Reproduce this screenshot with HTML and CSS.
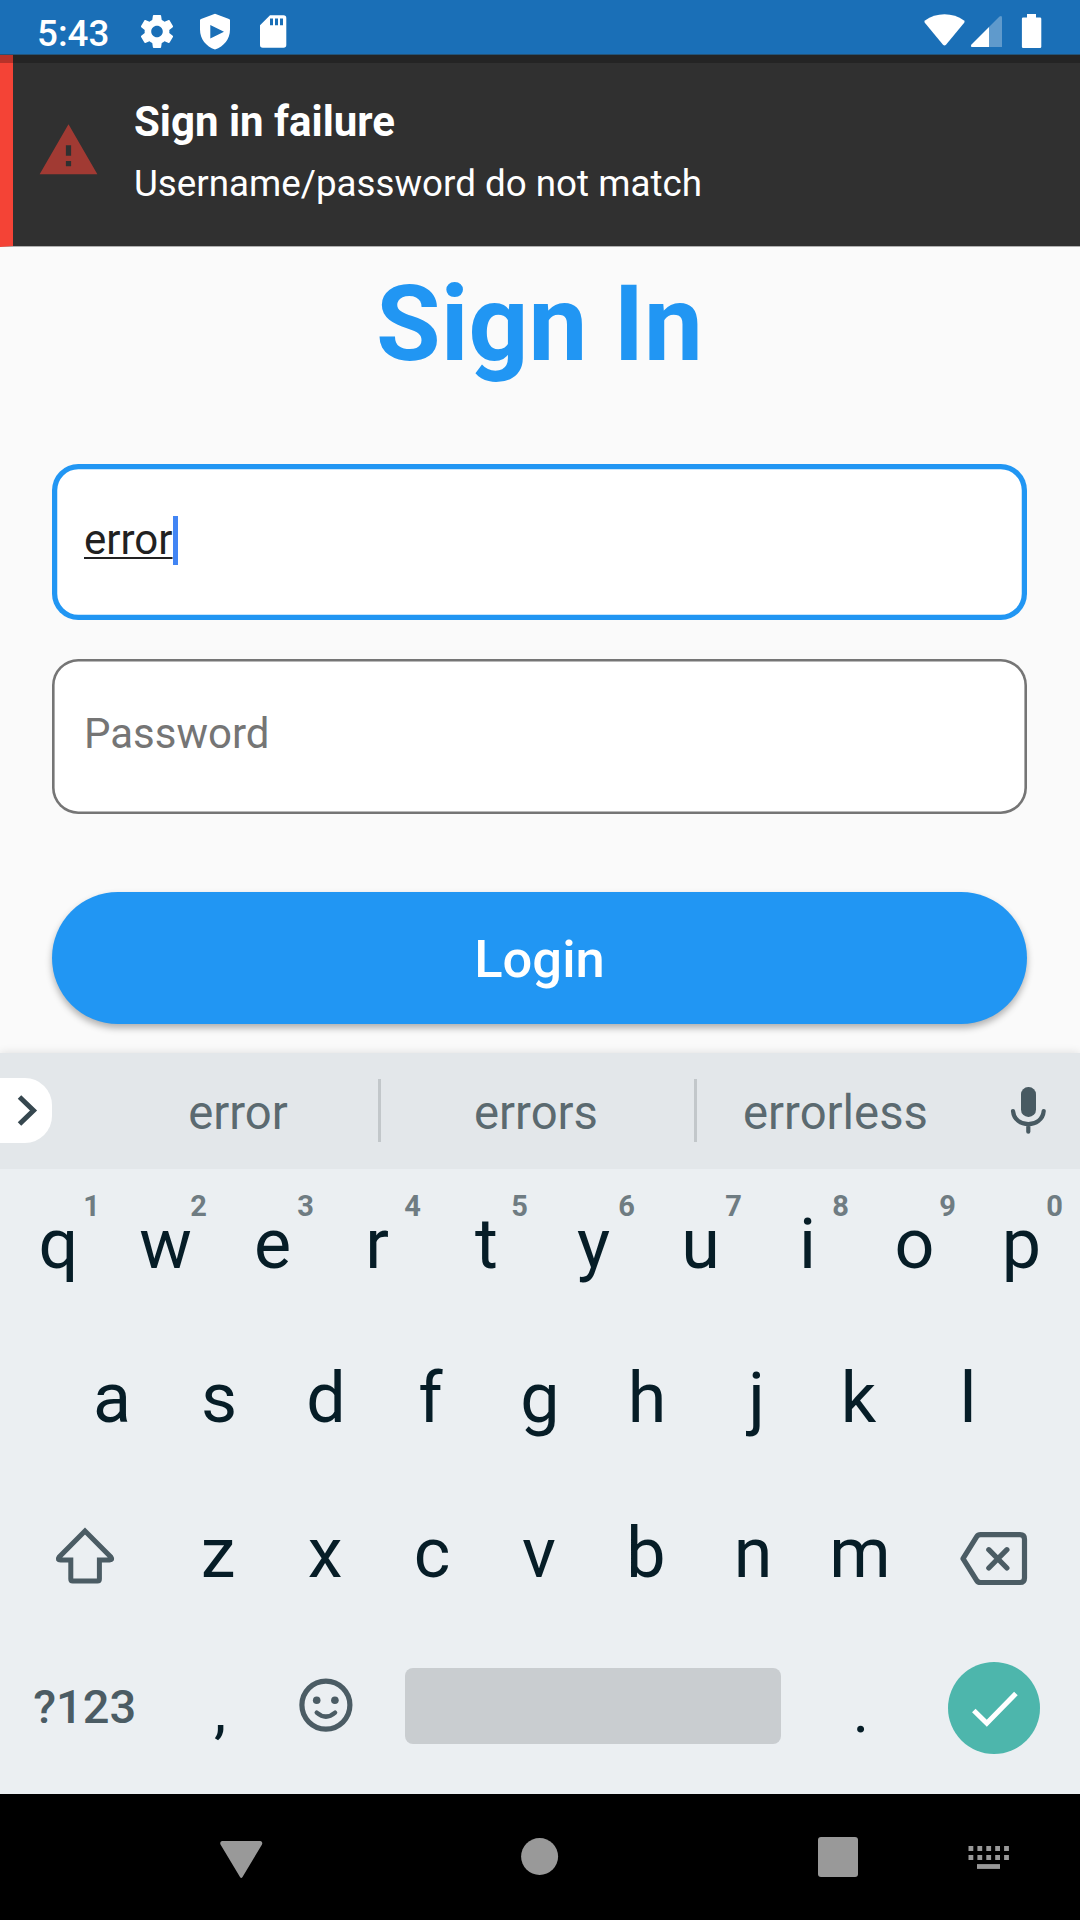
FILE: index.html
```html
<!DOCTYPE html>
<html lang="en">
<head>
<meta charset="utf-8">
<title>Sign In</title>
<link rel="stylesheet" href="styles.css">
</head>
<body>
<div class="screen">
  <header class="status">
    <span class="clock">5:43</span>
    <svg class="status-icon" width="40" height="54" viewBox="137 0 40 54"><path transform="translate(137.2 11.7) scale(1.65)" fill="#fff" d="M19.43 12.98c.04-.32.07-.64.07-.98s-.03-.66-.07-.98l2.11-1.65c.19-.15.24-.42.12-.64l-2-3.46c-.12-.22-.39-.3-.61-.22l-2.49 1c-.52-.4-1.08-.73-1.69-.98l-.38-2.65C14.46 2.18 14.25 2 14 2h-4c-.25 0-.46.18-.49.42l-.38 2.65c-.61.25-1.17.59-1.69.98l-2.49-1c-.23-.09-.49 0-.61.22l-2 3.46c-.13.22-.07.49.12.64l2.11 1.65c-.04.32-.07.65-.07.98s.03.66.07.98l-2.11 1.65c-.19.15-.24.42-.12.64l2 3.46c.12.22.39.3.61.22l2.49-1c.52.4 1.08.73 1.69.98l.38 2.65c.03.24.24.42.49.42h4c.25 0 .46-.18.49-.42l.38-2.65c.61-.25 1.17-.59 1.69-.98l2.49 1c.23.09.49 0 .61-.22l2-3.46c.12-.22.07-.49-.12-.64l-2.11-1.65zM12 15.5c-1.93 0-3.5-1.57-3.5-3.5s1.57-3.5 3.5-3.5 3.5 1.57 3.5 3.5-1.57 3.5-3.5 3.5z"/></svg>
    <svg class="status-icon" width="40" height="54" viewBox="195 0 40 54"><path fill="#fff" fill-rule="evenodd" d="M215 13.7 229 19q1 .4 1 1.500V29.500C230 39 224 46.500 215 49.500C206 46.500 200 39 200 29.500V20.500q0-1.100 1-1.500ZM210.300 25V38.500L224 31.700Z"/></svg>
    <svg class="status-icon" width="40" height="54" viewBox="253 0 40 54"><path fill="#fff" fill-rule="evenodd" d="M270 15.300H283.500q2.800 0 2.800 2.800V45q0 2.700-2.800 2.700H262.800q-2.800 0-2.800-2.700V25.300ZM270 18.500V25.300H273V18.500ZM275 18.500V25.300H278V18.500ZM280 18.500V25.300H283V18.500Z"/></svg>
    <svg class="status-right" width="130" height="54" viewBox="920 0 130 54">
      <path fill="#fff" d="M925 20.500C936 12 953 12 964 20.500q1.200 1 .2 2.300L946 44.700q-1.500 1.500-3 0L924.800 22.800q-1-1.300.2-2.300Z"/>
      <path fill="#fff" fill-opacity=".3" d="M989 27 999.500 16.500q2.500-1.500 2.500 1V47H989Z"/>
      <path fill="#fff" d="M989 27V47H972q-2-.5-.5-2.500Z"/>
      <path fill="#fff" d="M1027 14h9v3.500h4q1.300 0 1.300 1.300V46.700q0 1.300-1.300 1.300H1023.200q-1.300 0-1.300-1.300V18.800q0-1.300 1.300-1.300h3.800Z"/>
    </svg>
  </header>

  <section class="flushbar" role="alert">
    <svg class="warning" width="63" height="63" viewBox="0 0 24 24"><path fill="#a13a33" d="M1 21h22L12 2 1 21zm12-3h-2v-2h2v2zm0-4h-2v-4h2v4z"/></svg>
    <div class="flush-text">
      <div class="flush-title">Sign in failure</div>
      <div class="flush-message">Username/password do not match</div>
    </div>
  </section>

  <main class="content">
    <h1 class="heading">Sign In</h1>
    <div class="field focused"><span class="typed">error</span><span class="caret"></span></div>
    <div class="field"><span class="placeholder">Password</span></div>
    <div class="login" role="button">Login</div>
  </main>

  <section class="keyboard">
    <div class="suggestions">
      <div class="expand"><svg width="52" height="65" viewBox="0 1078.500 52 65"><path d="M19.500 1097.500 33.500 1111 19.500 1124.500" fill="none" stroke="#36474f" stroke-width="5"/></svg></div>
      <div class="word first">error</div>
      <div class="word middle">errors</div>
      <div class="word last">errorless</div>
      <svg class="mic" width="103" height="116" viewBox="977 1053 103 116"><rect x="1021" y="1087" width="15" height="30" rx="7.300" fill="#485a62"/><path d="M1013 1111C1014.500 1128.500 1042.200 1128.500 1043.700 1111M1028.300 1124V1131.700" fill="none" stroke="#485a62" stroke-width="4.200" stroke-linecap="round"/></svg>
    </div>
    <div class="keys">
      <div class="row">
        <div class="key">q<span class="hint">1</span></div><div class="key">w<span class="hint">2</span></div><div class="key">e<span class="hint">3</span></div><div class="key nudge-left">r<span class="hint">4</span></div><div class="key">t<span class="hint">5</span></div><div class="key">y<span class="hint">6</span></div><div class="key">u<span class="hint">7</span></div><div class="key">i<span class="hint">8</span></div><div class="key">o<span class="hint">9</span></div><div class="key">p<span class="hint">0</span></div>
      </div>
      <div class="row home">
        <div class="key">a</div><div class="key">s</div><div class="key">d</div><div class="key nudge-left">f</div><div class="key">g</div><div class="key">h</div><div class="key nudge-right">j</div><div class="key nudge-left">k</div><div class="key">l</div>
      </div>
      <div class="row">
        <div class="key wide"><svg width="80" height="80" viewBox="45 1513 80 80"><path d="M85 1531 59 1557.200Q57 1560 60.500 1560H70.800V1579q0 2 2 2H97.400q2 0 2-2V1560H109.700Q113 1560 111 1557.200Z" fill="none" stroke="#4b5c64" stroke-width="5"/></svg></div>
        <div class="key nudge-slight">z</div><div class="key nudge-slight">x</div><div class="key nudge-slight">c</div><div class="key nudge-slight">v</div><div class="key nudge-slight">b</div><div class="key nudge-slight">n</div><div class="key nudge-slight">m</div>
        <div class="key wide"><svg width="80" height="80" viewBox="954.500 1513 80 80"><path d="M962.500 1558.700 976.200 1536.700Q977.500 1534.700 980 1534.700H1019.500q4.500 0 4.500 4.500V1578q0 4.500-4.500 4.500H980Q977.500 1582.500 976.200 1580.500ZM988.300 1549.700 1006.400 1568M1006.400 1549.700 988.300 1568" fill="none" stroke="#4b5c64" stroke-width="5.200" stroke-linecap="round" stroke-linejoin="round"/></svg></div>
      </div>
      <div class="row">
        <div class="key wide symbols">?123</div>
        <div class="key punct comma">,</div>
        <div class="key"><svg width="80" height="80" viewBox="285.500 1667.400 80 80"><circle cx="325.400" cy="1705.500" r="24" fill="none" stroke="#4b5c64" stroke-width="5.200"/><circle cx="316.200" cy="1700.700" r="3.800" fill="#4b5c64"/><circle cx="334.400" cy="1700.700" r="3.800" fill="#4b5c64"/><path d="M316.200 1713Q325.400 1721 334.600 1713" fill="none" stroke="#4b5c64" stroke-width="4.400" stroke-linecap="round"/></svg></div>
        <div class="key space"><span class="space-bar"></span></div>
        <div class="key punct">.</div>
        <div class="key wide"><svg width="100" height="100" viewBox="945 1657 100 100"><circle cx="994" cy="1708" r="46" fill="#4db6ac"/><path d="M973.800 1710.500 986.800 1723.300 1015.900 1693.500" fill="none" stroke="#fff" stroke-width="5"/></svg></div>
      </div>
    </div>
  </section>

  <nav class="navbar">
    <svg width="44" height="126" viewBox="219 1794 44 126"><path fill="#999" d="M222 1841H260.500Q263 1841.500 262 1844.500L242.500 1877Q241.200 1879 240 1877L220.500 1844.500Q219.500 1841.500 222 1841Z"/></svg>
    <svg width="44" height="126" viewBox="518 1794 44 126"><circle cx="539.600" cy="1856.500" r="18.500" fill="#999"/></svg>
    <svg width="44" height="126" viewBox="816 1794 44 126"><rect x="818" y="1837" width="40" height="40" rx="3" fill="#999"/></svg>
    <svg class="ime" width="44" height="126" viewBox="967 1794 44 126"><path stroke="#999" stroke-width="5" stroke-dasharray="4.800 4.100" d="M968.500 1848.500H1009M968.500 1857.500H1009"/><path stroke="#999" stroke-width="4.800" d="M977 1866.500H1000"/></svg>
  </nav>
</div>
</body>
</html>
```
FILE: styles.css
```css
* { box-sizing: border-box; }
body { margin: 0; font-family: Roboto, sans-serif; background: #fafafa; }
svg { display: block; flex: none; }

.screen {
  width: 1080px;
  height: 1920px;
  display: flex;
  flex-direction: column;
  overflow: hidden;
}

/* Status bar */
.status {
  height: 55px;
  flex: none;
  display: flex;
  background: #1a6fb7;
  border-bottom: 1px solid #235378;
  color: #fff;
}
.clock {
  width: 100px;
  margin-left: 37px;
  font-size: 36.75px;
  font-weight: 500;
  line-height: 68px;
}
.status-icon { margin-right: 18px; }
.status-right { margin-left: auto; margin-right: 30px; }

/* Error notification */
.flushbar {
  height: 192px;
  flex: none;
  display: flex;
  border-left: 13px solid #f44336;
  border-bottom: 1px solid #b0b0b0;
  padding-left: 24px;
  background: #303030;
  box-shadow: inset 0 8px #242424;
  color: #fff;
  position: relative;
}
.flushbar::before {
  content: "";
  position: absolute;
  left: -13px;
  top: 0;
  width: 13px;
  height: 8px;
  background: #b73229;
}
.warning { margin-top: 64px; }
.flush-text { margin: 42px 0 0 34px; }
.flush-title { font-size: 42px; font-weight: 700; line-height: 50px; }
.flush-message { font-size: 36.75px; line-height: 44px; margin-top: 15px; }

/* Form */
.content {
  height: 806px;
  flex: none;
  display: flex;
  flex-direction: column;
  padding: 17px 53px 0 52px;
}
.heading {
  margin: 0 0 78.300px;
  font-size: 105px;
  font-weight: 700;
  line-height: 122px;
  text-align: center;
  color: #2196f3;
}
.field {
  height: 155.300px;
  flex: none;
  margin-bottom: 39px;
  display: flex;
  align-items: center;
  padding: 0 32px 5px;
  border-radius: 26.250px;
  background: #fff;
  box-shadow: inset 0 0 0 2.600px #757575;
  font-size: 42px;
}
.field.focused { box-shadow: inset 0 0 0 5.250px #2196f3; }
.typed {
  color: #212121;
  text-decoration: underline;
  text-decoration-thickness: 2px;
  text-underline-offset: 3px;
  text-decoration-skip-ink: none;
}
.caret { width: 5px; height: 49px; background: #4285f4; margin-top: 2px; }
.placeholder { color: #757575; }
.login {
  height: 131.700px;
  flex: none;
  margin-top: 39.200px;
  border-radius: 66px;
  background: #2196f3;
  box-shadow: 0 4px 7px rgba(0, 0, 0, .3);
  color: #fff;
  font-size: 52.500px;
  font-weight: 500;
  line-height: 135px;
  text-align: center;
}

/* Keyboard */
.keyboard {
  height: 741px;
  flex: none;
  background: #ebeff2;
  box-shadow: 0 0 9px rgba(0, 0, 0, .12);
}
.suggestions {
  height: 116px;
  display: flex;
  align-items: center;
  background: #e3e7ea;
}
.expand {
  width: 52px;
  height: 65px;
  margin-bottom: 1px;
  background: #fff;
  border-radius: 0 27px 27px 0;
}
.word {
  height: 63px;
  margin-bottom: 1px;
  font-size: 47.250px;
  line-height: 69px;
  text-align: center;
  color: #5b6a70;
}
.first { width: 283px; margin-left: 46px; }
.middle { width: 316px; padding-right: 3px; }
.last { width: 280px; padding-right: 3px; }
.first, .middle { border-right: 3px solid #c2c7ca; }

.keys {
  height: 625px;
  overflow: hidden;
}
.row {
  height: 154.400px;
  display: flex;
  justify-content: center;
}
.key {
  width: 107px;
  flex: none;
  padding-bottom: 4px;
  position: relative;
  display: flex;
  align-items: center;
  justify-content: center;
  font-size: 70px;
  color: #061d27;
}
.home .key { padding-bottom: 6px; }
.key.nudge-left { padding-right: 5px; }
.key.nudge-right { padding-left: 5px; }
.key.nudge-slight { padding-right: 2px; }
.hint {
  position: absolute;
  right: 12px;
  top: 20px;
  font-size: 29px;
  line-height: 34px;
  font-weight: 700;
  color: #6f7c82;
}
.wide { width: 160.500px; }
.symbols { font-size: 47px; font-weight: 500; color: #4b5c64; padding: 0 1px 6px 0; }
.punct { font-size: 62px; padding-bottom: 0; padding-top: 1.500px; }
.comma { padding-left: 2px; }
.space { width: 428px; }
.space-bar {
  width: 376px;
  height: 76px;
  margin: 0 2px 3px 0;
  border-radius: 8px;
  background: #c9cdd0;
}

/* Navigation bar */
.navbar {
  height: 126px;
  flex: none;
  display: flex;
  gap: 254.500px;
  padding-left: 219px;
  background: #000;
}
.ime { margin-left: -147.500px; }
```
